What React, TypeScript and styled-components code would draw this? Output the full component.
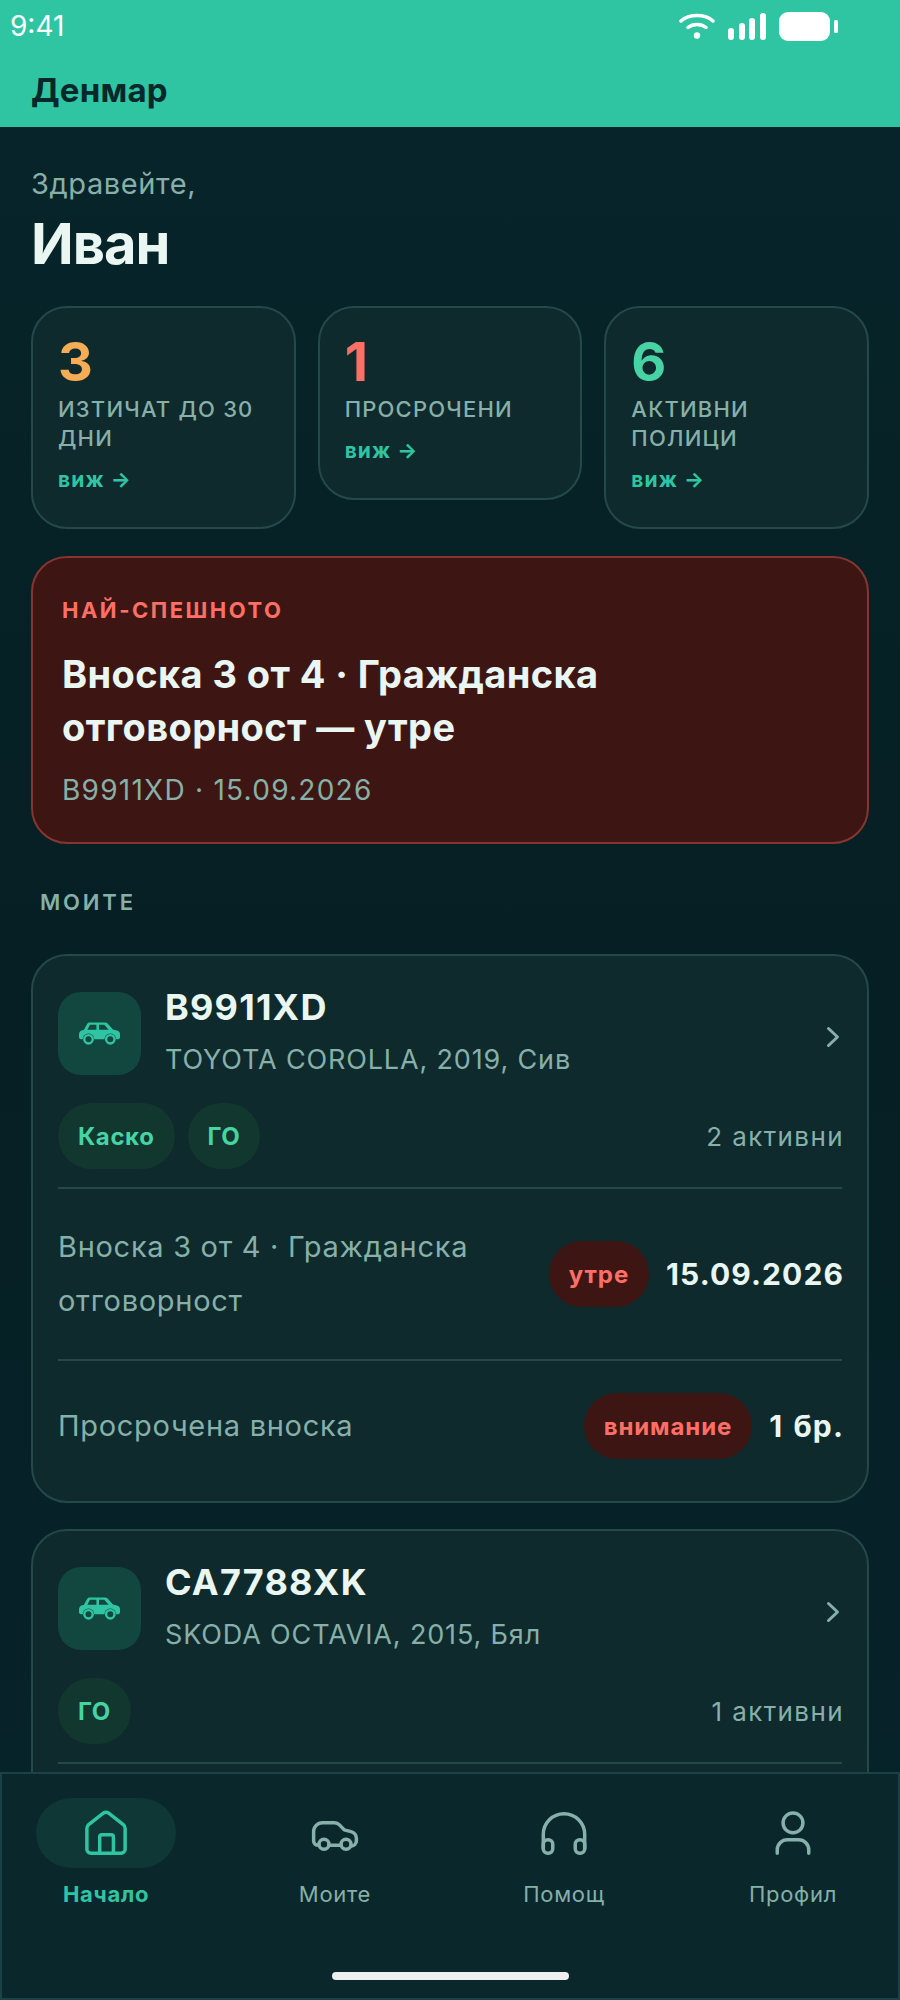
import React from 'react';
import styled, { createGlobalStyle } from 'styled-components';

const GlobalStyle = createGlobalStyle`
  html, body {
    margin: 0;
    padding: 0;
    background: #06242a;
  }
  * {
    box-sizing: border-box;
  }
`;

const green = '#2fc5a2';
const mint = '#47d3a4';
const red = '#ff6f66';
const muted = '#86b0a9';
const light = '#e9f6f2';

function CarGlyph() {
  return (
    <svg width="41" height="24" viewBox="0 0 41 24" fill={green}>
      <path d="M10.500.4h15.600c1 0 1.800.4 2.500 1.100L34 7.600l3.800.8c1.900.4 3.200 1.700 3.200 3.400v3.500c0 1.100-.8 1.900-1.900 1.900H1.900C.8 17.200 0 16.400 0 15.300v-3c0-1.900 1.200-3.500 3.200-4L4.800 8l3.300-6c.5-1 1.300-1.600 2.400-1.600z" />
      <path d="M11 2.700 8.400 7.700h9V2.700zM20 2.700v5h9.600l-4.300-5z" fill="#124740" />
      <circle cx="9.500" cy="17.300" r="5.800" fill="#124740" />
      <circle cx="31.300" cy="17.300" r="5.800" fill="#124740" />
      <circle cx="9.500" cy="17.300" r="4.200" fill="none" stroke={green} strokeWidth="2.400" />
      <circle cx="31.300" cy="17.300" r="4.200" fill="none" stroke={green} strokeWidth="2.400" />
    </svg>
  );
}

function Chevron() {
  return (
    <svg width="14" height="22" viewBox="0 0 14 22" fill="none" stroke={muted} strokeWidth="3" strokeLinecap="round" strokeLinejoin="round">
      <path d="M2.500 2.500 11.500 11 2.500 19.500" />
    </svg>
  );
}

function HomeIcon() {
  return (
    <svg width="54" height="54" viewBox="0 0 24 24" fill="none" stroke={green} strokeWidth="1.550" strokeLinecap="round" strokeLinejoin="round">
      <path d="M10.800 3.200a2 2 0 0 1 2.400 0l6.500 5.100c.5.400.8 1 .8 1.600v9.300a1.800 1.800 0 0 1-1.800 1.800H5.300a1.800 1.800 0 0 1-1.800-1.800V9.900c0-.6.300-1.200.8-1.600z" />
      <path d="M9.200 21v-7.200a1 1 0 0 1 1-1h4.100a1 1 0 0 1 1 1V21" />
    </svg>
  );
}

function CarIcon() {
  return (
    <svg width="54" height="54" viewBox="0 0 24 24" fill="none" stroke={muted} strokeWidth="1.550" strokeLinecap="round" strokeLinejoin="round">
      <path d="M4.900 17.400H4.300a1.800 1.800 0 0 1-1.800-1.800V11.500a4 4 0 0 1 4-4.100h5.300a3 3 0 0 1 2.200 1l2.100 2.200 3 .8a3.200 3.200 0 0 1 2.400 3v1a2.400 2.400 0 0 1-2.400 2.400M9.300 17.400h5.400" />
      <circle cx="7.100" cy="17" r="2.200" />
      <circle cx="16.900" cy="17" r="2.200" />
    </svg>
  );
}

function HeadsetIcon() {
  return (
    <svg width="54" height="54" viewBox="0 0 24 24" fill="none" stroke={muted} strokeWidth="1.550" strokeLinecap="round" strokeLinejoin="round">
      <path d="M2.800 19V12.600a9.200 9.200 0 0 1 18.400 0V19" />
      <rect x="2.800" y="15" width="4.200" height="6" rx="2" />
      <rect x="17" y="15" width="4.200" height="6" rx="2" />
    </svg>
  );
}

function UserIcon() {
  return (
    <svg width="54" height="54" viewBox="0 0 24 24" fill="none" stroke={muted} strokeWidth="1.550" strokeLinecap="round" strokeLinejoin="round">
      <circle cx="12" cy="7.500" r="4.400" />
      <path d="M5 21v-1.500A4.500 4.500 0 0 1 9.500 15h5a4.500 4.500 0 0 1 4.500 4.500V21" />
    </svg>
  );
}

const stats = [
  { value: '3', label: 'Изтичат до 30 дни', color: '#f4ad55' },
  { value: '1', label: 'Просрочени', color: red },
  { value: '6', label: 'Активни полици', color: mint },
];

export default function App() {
  return (
    <Screen>
      <GlobalStyle />
      <TopBar>
        <StatusBar>
          <Clock>9:41</Clock>
          <StatusIcons>
            <svg width="36" height="26" viewBox="0 0 36 26" fill="none" stroke="#fff" strokeWidth="3.500" strokeLinecap="round">
              <path d="M2 8C10 .8 26 .8 34 8M9 14.500c5-4 13-4 18 0" />
              <circle cx="18" cy="22.500" r="3.200" fill="#fff" stroke="none" />
            </svg>
            <svg width="38" height="27" viewBox="0 0 38 27" fill="#fff">
              <rect x="0" y="15" width="6" height="12" rx="3" />
              <rect x="11" y="10" width="6" height="17" rx="3" />
              <rect x="21" y="5" width="6" height="22" rx="3" />
              <rect x="32" y="0" width="6" height="27" rx="3" />
            </svg>
            <svg width="59" height="29" viewBox="0 0 59 29" fill="#fff">
              <rect x="0" y="0" width="51" height="29" rx="9" />
              <rect x="55" y="8" width="4" height="13" rx="1.500" />
            </svg>
          </StatusIcons>
        </StatusBar>
        <AppTitle>Денмар</AppTitle>
      </TopBar>

      <Content>
        <Greeting>Здравейте,</Greeting>
        <UserName>Иван</UserName>

        <StatsRow>
          {stats.map((s) => (
            <StatCard key={s.label}>
              <StatValue $color={s.color}>{s.value}</StatValue>
              <StatLabel>{s.label}</StatLabel>
              <SeeLink>виж →</SeeLink>
            </StatCard>
          ))}
        </StatsRow>

        <UrgentCard>
          <UrgentKicker>Най-спешното</UrgentKicker>
          <UrgentTitle>Вноска 3 от 4 · Гражданска отговорност — утре</UrgentTitle>
          <UrgentMeta>B9911XD · 15.09.2026</UrgentMeta>
        </UrgentCard>

        <SectionTitle>Моите</SectionTitle>

        <VehicleList>
          <VehicleCard>
            <VehicleHead>
              <IconTile>
                <CarGlyph />
              </IconTile>
              <VehicleInfo>
                <Plate>B9911XD</Plate>
                <Model>TOYOTA COROLLA, 2019, Сив</Model>
              </VehicleInfo>
              <ChevronSlot>
                <Chevron />
              </ChevronSlot>
            </VehicleHead>
            <TagsRow>
              <Tag>Каско</Tag>
              <Tag>ГО</Tag>
              <ActiveCount>2 активни</ActiveCount>
            </TagsRow>
            <Row>
              <RowText>Вноска 3 от 4 · Гражданска отговорност</RowText>
              <AlertPill>утре</AlertPill>
              <RowValue>15.09.2026</RowValue>
            </Row>
            <Row>
              <RowText>Просрочена вноска</RowText>
              <AlertPill>внимание</AlertPill>
              <RowValue>1 бр.</RowValue>
            </Row>
          </VehicleCard>

          <VehicleCard>
            <VehicleHead>
              <IconTile>
                <CarGlyph />
              </IconTile>
              <VehicleInfo>
                <Plate>CA7788XK</Plate>
                <Model>SKODA OCTAVIA, 2015, Бял</Model>
              </VehicleInfo>
              <ChevronSlot>
                <Chevron />
              </ChevronSlot>
            </VehicleHead>
            <TagsRow>
              <Tag>ГО</Tag>
              <ActiveCount>1 активни</ActiveCount>
            </TagsRow>
            <Row>
              <RowText>Вноска 1 от 2 · Гражданска отговорност</RowText>
            </Row>
          </VehicleCard>
        </VehicleList>
      </Content>

      <BottomNav>
        <NavItems>
          <NavItem>
            <NavIconWrap $active>
              <HomeIcon />
            </NavIconWrap>
            <NavLabel $active>Начало</NavLabel>
          </NavItem>
          <NavItem>
            <NavIconWrap>
              <CarIcon />
            </NavIconWrap>
            <NavLabel>Моите</NavLabel>
          </NavItem>
          <NavItem>
            <NavIconWrap>
              <HeadsetIcon />
            </NavIconWrap>
            <NavLabel>Помощ</NavLabel>
          </NavItem>
          <NavItem>
            <NavIconWrap>
              <UserIcon />
            </NavIconWrap>
            <NavLabel>Профил</NavLabel>
          </NavItem>
        </NavItems>
        <HomeBar />
      </BottomNav>
    </Screen>
  );
}

const Screen = styled.div`
  position: relative;
  width: 900px;
  height: 2000px;
  overflow: hidden;
  font-family: Inter, 'Noto Sans', sans-serif;
  background: linear-gradient(180deg, #06252a 0%, #061f24 50%, #06242a 100%);
`;

const TopBar = styled.header`
  background: ${green};
  height: 127px;
  padding: 0 10px;
`;

const StatusBar = styled.div`
  display: flex;
  justify-content: space-between;
  align-items: center;
  height: 52px;
  padding-right: 52px;
`;

const Clock = styled.span`
  color: #fff;
  font-size: 28px;
  line-height: 50px;
`;

const StatusIcons = styled.div`
  display: flex;
  align-items: center;
  gap: 13px;
`;

const AppTitle = styled.div`
  color: #06282b;
  font-size: 33px;
  font-weight: 700;
  line-height: 40px;
  letter-spacing: 0.2px;
  padding: 18px 0 0 21px;
`;

const Content = styled.main`
  padding: 39px 31px 0;
`;

const Greeting = styled.div`
  color: ${muted};
  font-size: 29px;
  line-height: 36px;
  letter-spacing: 0.6px;
`;

const UserName = styled.div`
  color: ${light};
  font-size: 56px;
  font-weight: 700;
  line-height: 70px;
  letter-spacing: -1px;
  margin-top: 7px;
`;

const StatsRow = styled.div`
  display: grid;
  grid-template-columns: repeat(3, 1fr);
  gap: 22px;
  align-items: start;
  margin-top: 27px;
`;

const StatCard = styled.div`
  background: #0e2a2d;
  border: 2px solid #24494b;
  border-radius: 36px;
  padding: 24px 25px 35px;
`;

const StatValue = styled.div<{ $color: string }>`
  color: ${(p) => p.$color};
  font-size: 54px;
  font-weight: 650;
  line-height: 60px;
`;

const StatLabel = styled.div`
  color: ${muted};
  font-size: 22px;
  font-weight: 550;
  line-height: 29px;
  letter-spacing: 1.2px;
  text-transform: uppercase;
  margin-top: 3px;
`;

const SeeLink = styled.div`
  color: ${green};
  font-size: 21px;
  font-weight: 700;
  line-height: 24px;
  letter-spacing: 1.1px;
  margin-top: 15px;
`;

const UrgentCard = styled.section`
  background: #3d1614;
  border: 2px solid #873530;
  border-radius: 36px;
  padding: 38px 29px 34px;
  margin-top: 27px;
`;

const UrgentKicker = styled.div`
  color: ${red};
  font-size: 22px;
  font-weight: 650;
  line-height: 28px;
  letter-spacing: 2.5px;
  text-transform: uppercase;
`;

const UrgentTitle = styled.div`
  color: ${light};
  font-size: 38px;
  font-weight: 650;
  line-height: 53px;
  letter-spacing: 0.4px;
  max-width: 640px;
  margin-top: 24px;
`;

const UrgentMeta = styled.div`
  color: ${muted};
  font-size: 28px;
  line-height: 36px;
  letter-spacing: 1.25px;
  margin-top: 18px;
`;

const SectionTitle = styled.h2`
  color: ${muted};
  font-size: 22px;
  font-weight: 600;
  line-height: 28px;
  letter-spacing: 2.8px;
  text-transform: uppercase;
  margin: 44px 0 0 9px;
`;

const VehicleList = styled.div`
  display: flex;
  flex-direction: column;
  gap: 26px;
  margin-top: 38px;
`;

const VehicleCard = styled.section`
  background: #0e2a2d;
  border: 2px solid #24494b;
  border-radius: 36px;
  padding: 29px 25px 10px;
`;

const VehicleHead = styled.div`
  display: flex;
  align-items: center;
  gap: 24px;
  padding-right: 2px;
`;

const IconTile = styled.div`
  display: flex;
  align-items: center;
  justify-content: center;
  flex: none;
  width: 83px;
  height: 83px;
  margin-top: 4px;
  border-radius: 23px;
  background: #124740;
`;

const VehicleInfo = styled.div`
  flex: 1;
  min-width: 0;
`;

const ChevronSlot = styled.div`
  display: flex;
  margin-top: 10px;
`;

const Plate = styled.div`
  color: ${light};
  font-size: 36px;
  font-weight: 700;
  line-height: 44px;
  letter-spacing: 1.2px;
`;

const Model = styled.div`
  color: ${muted};
  font-size: 27px;
  line-height: 36px;
  letter-spacing: 0.85px;
  margin-top: 13px;
`;

const TagsRow = styled.div`
  display: flex;
  align-items: center;
  gap: 13px;
  margin-top: 25px;
  padding-bottom: 18px;
`;

const Tag = styled.span`
  display: flex;
  align-items: center;
  height: 66px;
  padding: 0 20px;
  border-radius: 33px;
  background: #12372f;
  color: ${mint};
  font-size: 24px;
  font-weight: 650;
  letter-spacing: 0.6px;
`;

const ActiveCount = styled.span`
  margin-left: auto;
  margin-right: -2px;
  color: ${muted};
  font-size: 26px;
  letter-spacing: 1.4px;
`;

const Row = styled.div`
  display: flex;
  align-items: center;
  gap: 17px;
  border-top: 2px solid #24494b;
  min-height: 172px;
  &:last-child {
    min-height: 132px;
  }
`;

const RowText = styled.div`
  flex: 1;
  min-width: 0;
  color: ${muted};
  font-size: 29px;
  line-height: 54px;
  letter-spacing: 0.7px;
`;

const AlertPill = styled.span`
  display: flex;
  align-items: center;
  flex: none;
  height: 66px;
  padding: 0 20px;
  border-radius: 33px;
  background: #3d1614;
  color: ${red};
  font-size: 24px;
  font-weight: 650;
  letter-spacing: 0.9px;
`;

const RowValue = styled.span`
  flex: none;
  margin-right: -2px;
  color: ${light};
  font-size: 30px;
  font-weight: 650;
  letter-spacing: 1.1px;
  word-spacing: 2px;
`;

const BottomNav = styled.nav`
  position: absolute;
  left: 0;
  right: 0;
  bottom: 0;
  height: 228px;
  background: #0a282c;
  border: 2px solid #1c4245;
`;

const NavItems = styled.div`
  display: flex;
  justify-content: space-between;
  padding: 24px 35px 0 34px;
`;

const NavItem = styled.div`
  display: flex;
  flex-direction: column;
  align-items: center;
  gap: 11px;
`;

const NavIconWrap = styled.div<{ $active?: boolean }>`
  display: flex;
  align-items: center;
  justify-content: center;
  width: 140px;
  height: 70px;
  border-radius: 35px;
  background: ${(p) => (p.$active ? '#0e3735' : 'transparent')};
`;

const NavLabel = styled.span<{ $active?: boolean }>`
  color: ${(p) => (p.$active ? green : muted)};
  font-size: 22px;
  font-weight: ${(p) => (p.$active ? 650 : 400)};
  line-height: 30px;
  letter-spacing: 0.7px;
`;

const HomeBar = styled.div`
  position: absolute;
  left: 330px;
  bottom: 18px;
  width: 237px;
  height: 8px;
  border-radius: 4px;
  background: #eee;
`;
